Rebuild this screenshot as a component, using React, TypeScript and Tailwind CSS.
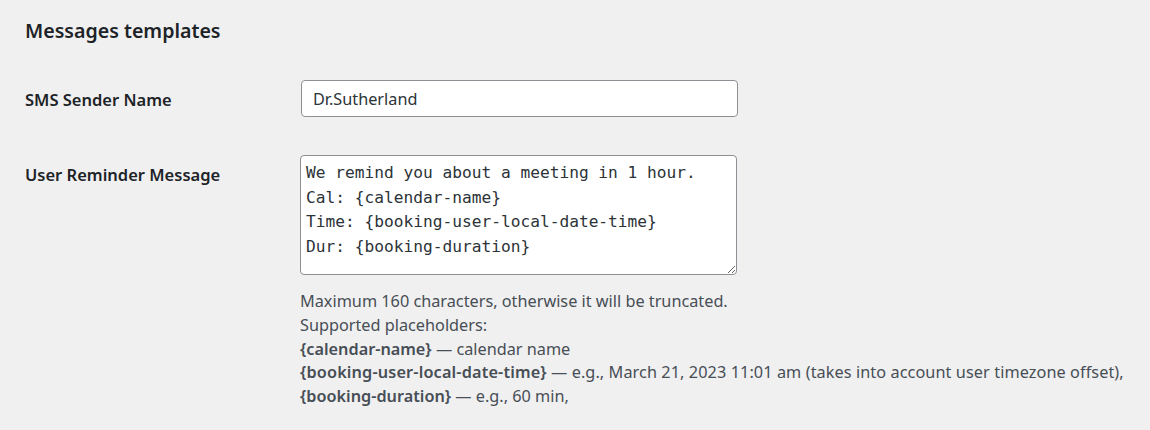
import React from "react";

const sans = "font-['Noto_Sans',sans-serif]";

export default function App() {
  const msg =
    "We remind you about a meeting in 1 hour.\nCal: {calendar-name}\nTime: {booking-user-local-date-time}\nDur: {booking-duration}";
  return (
    <div className={`${sans} bg-[#f0f0f1] min-h-[430px] w-full pl-[25px] pt-[17px] text-[#1d2327]`}>
      <h2 className="text-[19.6px] font-semibold leading-[28px]">Messages templates</h2>
      <div className="mt-[35px] grid grid-cols-[275px_437px]">
        <div className="mt-[8px] text-[16.5px] font-semibold leading-[24px]">SMS Sender Name</div>
        <div className="pl-[1px]">
          <input
            type="text"
            defaultValue="Dr.Sutherland"
            className="h-[37px] w-[437px] rounded-[4px] border border-[#8c8f94] bg-white pl-[11px] text-[16.25px] text-[#2c3338] outline-none"
          />
        </div>
        <div className="mt-[46px] text-[16.5px] font-semibold leading-[24px]">User Reminder Message</div>
        <div className="mt-[38px]">
          <textarea
            defaultValue={msg}
            className="block h-[120px] w-[437px] rounded-[4px] border border-[#8c8f94] bg-white pl-[5px] pt-[5px] font-['DejaVu_Sans_Mono',monospace] text-[16.2px] leading-[24.5px] text-[#2c3338] outline-none"
          />
        </div>
      </div>
      <div className="ml-[275px] mt-[15px] whitespace-nowrap text-[16.25px] leading-[23.8px] text-[#474e55]">
        <div>Maximum 160 characters, otherwise it will be truncated.</div>
        <div>Supported placeholders:</div>
        <div>
          <span className="font-semibold">{"{calendar-name}"}</span> — calendar name
        </div>
        <div>
          <span className="font-semibold tracking-[0.15px]">{"{booking-user-local-date-time}"}</span>{" "}
          <span className="tracking-[0.08px]">
            — e.g., March 21, 2023 11:01 am (takes into account user timezone offset),
          </span>
        </div>
        <div>
          <span className="font-semibold">{"{booking-duration}"}</span> — e.g., 60 min,
        </div>
      </div>
    </div>
  );
}
